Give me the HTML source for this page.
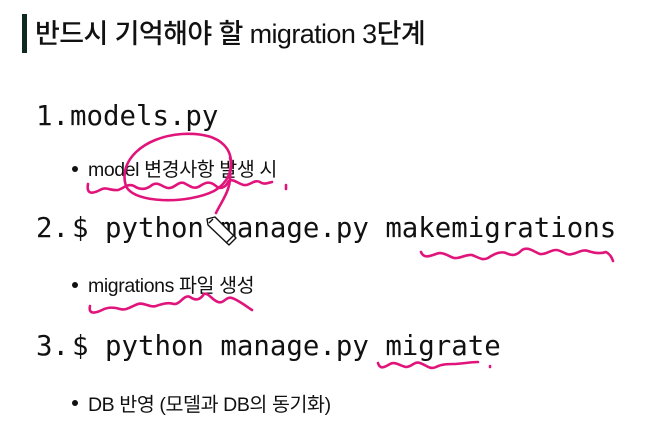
<!DOCTYPE html>
<html><head><meta charset="utf-8"><style>
html,body{margin:0;padding:0;background:#fff;width:647px;height:444px;overflow:hidden;position:relative}
.t{position:absolute;white-space:nowrap;color:#111;line-height:1}
.title{left:35px;top:12px;font:500 27px "Liberation Sans","Noto Sans CJK KR",sans-serif;letter-spacing:-0.6px}
.bar{position:absolute;left:22px;top:14px;width:5px;height:39px;background:#0f2a20}
.m{font:27.4px "DejaVu Sans Mono","Liberation Mono",monospace}
.b{font:19.5px "Liberation Sans","Noto Sans CJK KR",sans-serif;letter-spacing:-0.4px}
.dot{position:absolute;width:6px;height:6px;border-radius:50%;background:#111}
svg{position:absolute;left:0;top:0}
</style></head><body>
<div class="bar"></div>
<div class="t title">반드시 기억해야 할 migration 3단계</div>
<div class="t m" style="left:36px;top:101px">1.</div>
<div class="t m" style="left:70px;top:101px">models.py</div>
<div class="dot" style="left:72px;top:166px"></div>
<div class="t b" style="left:88px;top:153px">model 변경사항 발생 시</div>
<div class="t m" style="left:36px;top:213px">2.</div>
<div class="t m" style="left:72px;top:213px">$ python manage.py makemigrations</div>
<div class="dot" style="left:72px;top:282px"></div>
<div class="t b" style="left:88px;top:269px">migrations 파일 생성</div>
<div class="t m" style="left:36px;top:331px">3.</div>
<div class="t m" style="left:72px;top:331px">$ python manage.py migrate</div>
<div class="dot" style="left:72px;top:400px"></div>
<div class="t b" style="left:88px;top:388px">DB 반영 (모델과 DB의 동기화)</div>
<svg width="647" height="444" viewBox="0 0 647 444" fill="none" stroke="#e0147a" stroke-width="2.6" stroke-linecap="round" stroke-linejoin="round">
<path d="M228 178 C238 150 222 132 182 134 C142 137 118 162 126 186 C134 204 188 204 214 191 C228 183 234 168 230 158"/>
<path d="M230 170 C232 190 222 200 216 213"/>
<path d="M88 184 C86 196 94 193 100 190 C106 186 110 191 118 190 C124 188 128 183 134 186 C140 190 146 190 152 185 C158 181 162 187 168 188 C174 189 178 181 184 183 C190 186 194 190 200 186 C206 182 210 181 216 186 C220 190 226 187 228 182 C232 177 238 184 244 185 C250 186 254 179 260 182 C264 185 268 183 272 182"/>
<path d="M286 185 L286 189"/>
<path d="M421 252 C424 259 430 256 436 254 C442 251 448 256 454 258 C460 259 466 254 472 255 C478 257 482 261 488 258 C494 254 500 251 506 253 C512 256 516 256 522 250 C528 246 534 252 540 254 C546 255 550 250 556 250 C562 250 566 256 572 254 C578 253 582 249 588 251 C594 253 600 254 606 252 C610 254 612 258 613 261"/>
<path d="M90 306 C88 315 96 313 102 310 C108 307 114 307 120 309 C126 311 132 306 138 304 C144 302 150 308 156 306 C162 304 168 302 174 304 C180 305 184 294 190 297 C196 301 200 300 204 294 C208 292 212 300 218 302 C224 304 226 296 232 298 C238 300 246 306 252 310"/>
<path d="M378 363 C380 370 385 367 390 364 C395 361 400 366 406 367 C412 367 414 361 420 363 C426 365 430 370 436 367 C442 364 448 364 454 364 C460 364 470 362 478 362"/>
<path d="M490 366 L490 367"/>
</svg>
<svg width="647" height="444" viewBox="0 0 647 444" fill="#fff" stroke="#111" stroke-width="1.4" stroke-linejoin="round">
<path d="M207 219 L215 217 L236 238 L229 245 L208 225 Z"/>
<path d="M209 223 L213 219"/>
<path d="M226 243 L233 236"/>
</svg>
</body></html>
